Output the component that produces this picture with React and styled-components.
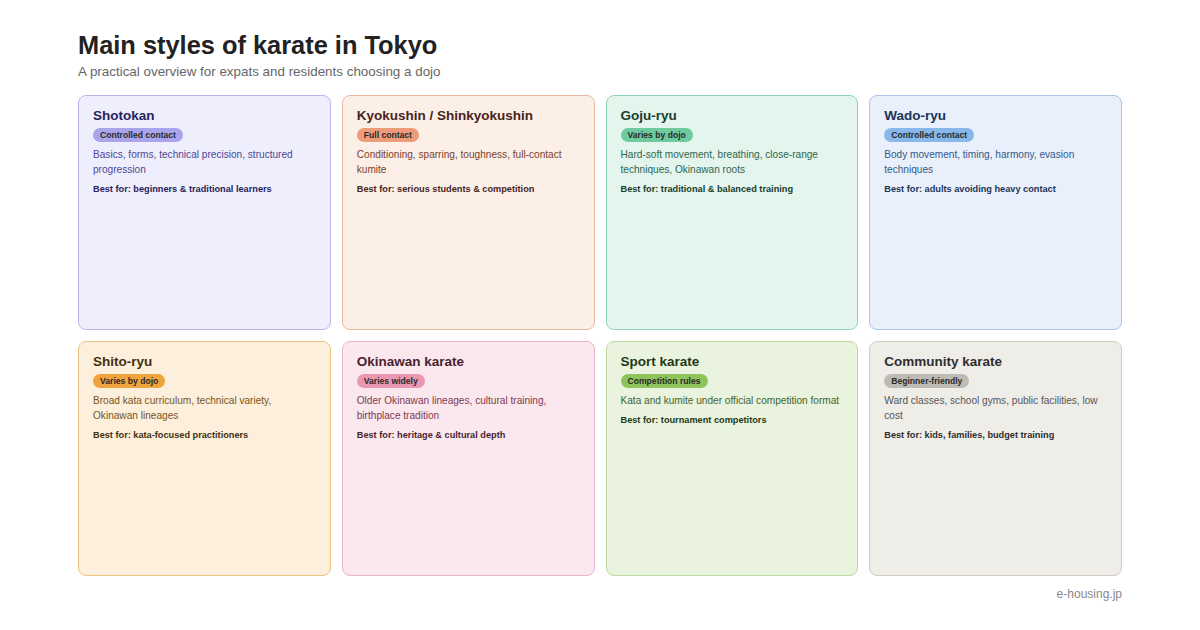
import styled, { createGlobalStyle } from "styled-components";

const Global = createGlobalStyle`
  body { margin: 0; background: #fff; font-family: "Liberation Sans", Arial, sans-serif; }
`;

const Page = styled.div`
  width: 1200px;
  height: 630px;
  box-sizing: border-box;
  padding: 31px 78px 0;
`;
const Title = styled.h1`
  margin: 0;
  font-size: 25.4px;
  font-weight: 700;
  color: #222;
`;
const Subtitle = styled.p`
  margin: 4px 0 0;
  font-size: 13.4px;
  color: #666;
`;
const Grid = styled.div`
  margin-top: 16px;
  display: grid;
  grid-template-columns: repeat(4, 1fr);
  grid-auto-rows: 235px;
  gap: 11px 11px;
`;
const Card = styled.div`
  background: ${(p) => p.$bg};
  border: 1px solid ${(p) => p.$border};
  border-radius: 8px;
  padding: 12px 14px;
  box-sizing: border-box;
`;
const CardTitle = styled.h2`
  margin: 0;
  font-size: 13.5px;
  font-weight: 700;
  color: ${(p) => p.$c};
`;
const Badge = styled.span`
  display: inline-block;
  margin-top: 5px;
  padding: 2px 7px;
  border-radius: 8px;
  background: ${(p) => p.$bg};
  color: #2a2a2a;
  font-size: 8.6px;
  font-weight: 700;
`;
const Desc = styled.p`
  margin: 5px 0 0;
  font-size: 10.1px;
  line-height: 15px;
  color: ${(p) => p.$c};
`;
const Best = styled.p`
  margin: 7px 0 0;
  font-size: 9.2px;
  font-weight: 700;
  color: ${(p) => p.$c};
`;
const Footer = styled.div`
  text-align: right;
  margin-top: 11px;
  font-size: 12px;
  color: #888;
`;

const styles = [
  { name: "Shotokan", badge: "Controlled contact", desc: "Basics, forms, technical precision, structured progression", best: "beginners & traditional learners", bg: "#efeefd", border: "#bab6ec", chip: "#aaa4ec", title: "#27235a", text: "#4c4893" },
  { name: "Kyokushin / Shinkyokushin", badge: "Full contact", desc: "Conditioning, sparring, toughness, full-contact kumite", best: "serious students & competition", bg: "#fcefe8", border: "#ebb6a0", chip: "#ed9b79", title: "#46241a", text: "#7a3f2c" },
  { name: "Goju-ryu", badge: "Varies by dojo", desc: "Hard-soft movement, breathing, close-range techniques, Okinawan roots", best: "traditional & balanced training", bg: "#e3f5ed", border: "#92d4b7", chip: "#6dcb9e", title: "#183d2e", text: "#2f6650" },
  { name: "Wado-ryu", badge: "Controlled contact", desc: "Body movement, timing, harmony, evasion techniques", best: "adults avoiding heavy contact", bg: "#e9f0fb", border: "#a8c6e8", chip: "#88b7ea", title: "#1b3456", text: "#34588a" },
  { name: "Shito-ryu", badge: "Varies by dojo", desc: "Broad kata curriculum, technical variety, Okinawan lineages", best: "kata-focused practitioners", bg: "#fcefdc", border: "#eec382", chip: "#efa43d", title: "#45300f", text: "#7a5520" },
  { name: "Okinawan karate", badge: "Varies widely", desc: "Older Okinawan lineages, cultural training, birthplace tradition", best: "heritage & cultural depth", bg: "#fbe8ef", border: "#ebb3c6", chip: "#ea97b1", title: "#4a1f2e", text: "#7c3a51" },
  { name: "Sport karate", badge: "Competition rules", desc: "Kata and kumite under official competition format", best: "tournament competitors", bg: "#eaf3dd", border: "#bcd99d", chip: "#8dc45b", title: "#24381a", text: "#3f6330" },
  { name: "Community karate", badge: "Beginner-friendly", desc: "Ward classes, school gyms, public facilities, low cost", best: "kids, families, budget training", bg: "#efede8", border: "#d1cec6", chip: "#bebbb5", title: "#2e2e2e", text: "#555" },
];

export default function App() {
  return (
    <Page>
      <Global />
      <Title>Main styles of karate in Tokyo</Title>
      <Subtitle>A practical overview for expats and residents choosing a dojo</Subtitle>
      <Grid>
        {styles.map((s) => (
          <Card key={s.name} $bg={s.bg} $border={s.border}>
            <CardTitle $c={s.title}>{s.name}</CardTitle>
            <Badge $bg={s.chip}>{s.badge}</Badge>
            <Desc $c={s.text}>{s.desc}</Desc>
            <Best $c={s.title}>Best for: {s.best}</Best>
          </Card>
        ))}
      </Grid>
      <Footer>e-housing.jp</Footer>
    </Page>
  );
}
